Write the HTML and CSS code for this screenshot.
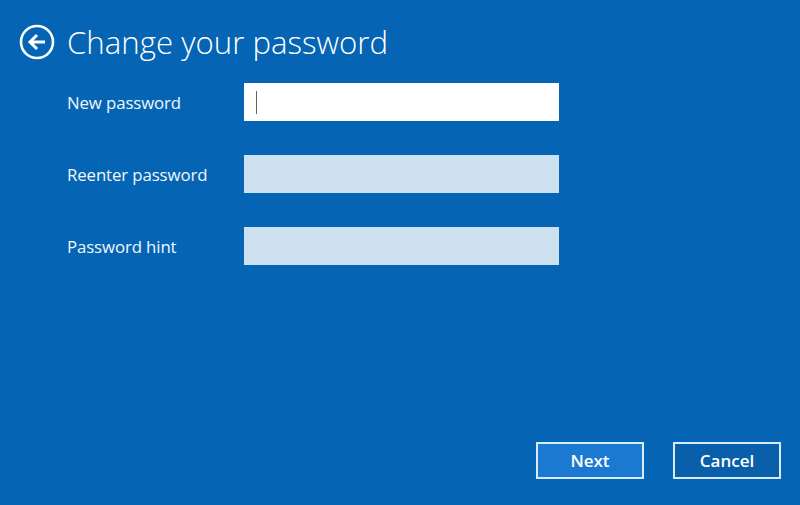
FILE: index.html
```html
<!DOCTYPE html>
<html lang="en">
<head>
<meta charset="utf-8">
<title>Change your password</title>
<link rel="stylesheet" href="styles.css">
</head>
<body>
<div class="page">
  <header class="header">
    <svg class="back" width="36" height="36" viewBox="0 0 36 36" aria-hidden="true">
      <circle cx="18" cy="18" r="16" fill="none" stroke="#fff" stroke-width="2.6"/>
      <path d="M11 18 H26 M18 11 L11 18 L18 25" fill="none" stroke="#fff" stroke-width="3" stroke-linecap="butt" stroke-linejoin="miter"/>
    </svg>
    <h1 class="title">Change your password</h1>
  </header>
  <div class="form">
    <label class="label">New password</label>
    <div class="field field-active"><span class="caret"></span></div>
    <label class="label">Reenter password</label>
    <div class="field"></div>
    <label class="label">Password hint</label>
    <div class="field"></div>
  </div>
  <footer class="footer">
    <button class="btn btn-primary">Next</button>
    <button class="btn">Cancel</button>
  </footer>
</div>
</body>
</html>
```

FILE: styles.css
```css
* { box-sizing: border-box; }
html, body { margin: 0; padding: 0; }
body {
  background: #0565b4;
  font-family: "Open Sans", "Noto Sans", sans-serif;
  color: #fff;
}
.page {
  width: 800px;
  height: 505px;
  display: flex;
  flex-direction: column;
}
.header {
  display: flex;
  align-items: center;
  padding: 24px 0 0 19px;
  height: 60px;
  gap: 12px;
}
.back { flex: none; display: block; }
.title {
  margin: 0;
  font-weight: 300;
  font-size: 31.2px;
  line-height: 38px;
}
.form {
  display: grid;
  grid-template-columns: 177px 315px;
  grid-auto-rows: 38px;
  row-gap: 34px;
  padding: 23px 0 0 67px;
  align-items: center;
}
.label {
  font-size: 16.8px;
  font-weight: 500;
  color: #f2f7fc;
  letter-spacing: -0.1px;
}
.field {
  height: 38px;
  background: #cde0f0;
  position: relative;
  display: flex;
  align-items: center;
}
.field-active { background: #ffffff; }
.caret {
  display: block;
  width: 1px;
  height: 23px;
  margin-left: 12px;
  background: #666;
}
.footer {
  margin-top: auto;
  display: flex;
  justify-content: flex-end;
  gap: 29px;
  padding: 0 19px 26px 0;
}
.btn {
  width: 108px;
  height: 37px;
  border: 2px solid #d6ecf8;
  background: #0a5fab;
  color: #fff;
  font-family: "Open Sans", "Noto Sans", sans-serif;
  font-size: 17px;
  font-weight: 600;
  padding: 0;
}
.btn-primary { background: #1c79d1; }
```
